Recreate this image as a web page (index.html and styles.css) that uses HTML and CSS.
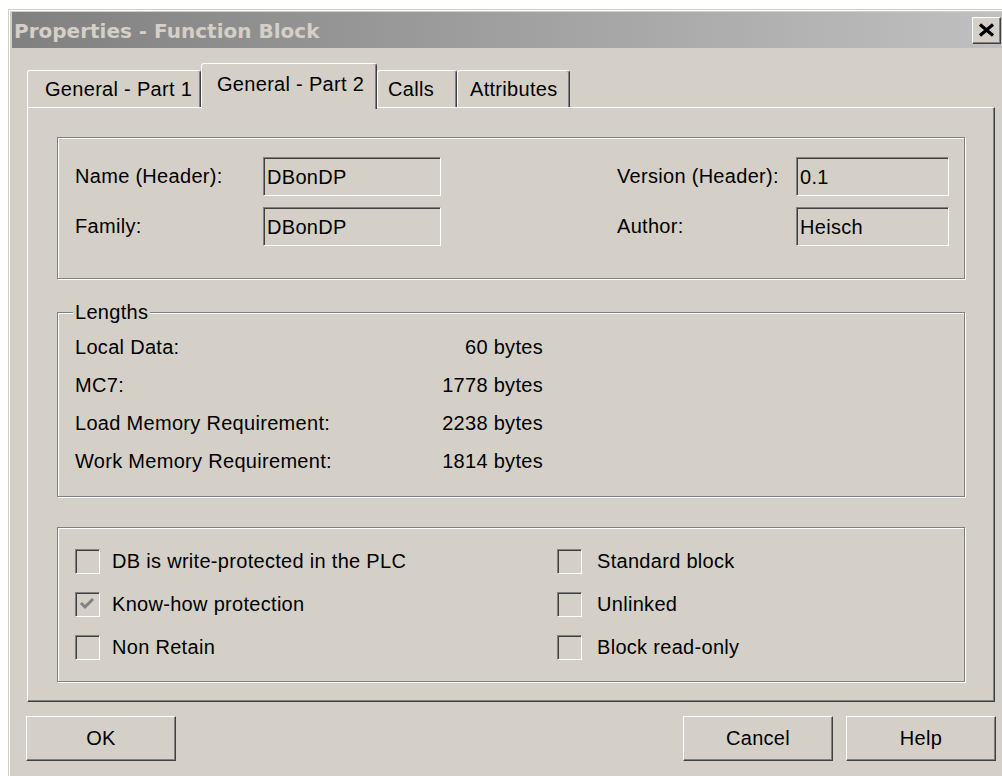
FILE: index.html
```html
<!DOCTYPE html>
<html lang="en">
<head>
<meta charset="utf-8">
<title>Properties - Function Block</title>
<link rel="stylesheet" href="styles.css">
</head>
<body>
<div class="dialog">
  <div class="titlebar">
    <span class="title">Properties - Function Block</span>
    <button class="close-btn" aria-label="Close">
      <svg width="17" height="14" viewBox="0 0 17 14"><path d="M2 1.5 L15 12.5 M15 1.5 L2 12.5" stroke="#000" stroke-width="3.2" fill="none"/></svg>
    </button>
  </div>

  <div class="dialog-body">
    <div class="tabs">
      <div class="tab tab-part1">General - Part 1</div>
      <div class="tab tab-part2 tab-active">General - Part 2</div>
      <div class="tab tab-calls">Calls</div>
      <div class="tab tab-attr">Attributes</div>
    </div>

    <div class="panel">
      <div class="group group-header">
        <span class="label">Name (Header):</span>
        <div class="field">DBonDP</div>
        <span></span>
        <span class="label">Version (Header):</span>
        <div class="field">0.1</div>

        <span class="label">Family:</span>
        <div class="field">DBonDP</div>
        <span></span>
        <span class="label">Author:</span>
        <div class="field">Heisch</div>
      </div>

      <div class="group group-lengths">
        <span class="group-caption">Lengths</span>
        <div class="len-row"><span>Local Data:</span><span class="len-value">60 bytes</span></div>
        <div class="len-row"><span>MC7:</span><span class="len-value">1778 bytes</span></div>
        <div class="len-row"><span>Load Memory Requirement:</span><span class="len-value">2238 bytes</span></div>
        <div class="len-row"><span>Work Memory Requirement:</span><span class="len-value">1814 bytes</span></div>
      </div>

      <div class="group group-flags">
        <label class="check"><span class="box"></span>DB is write-protected in the PLC</label>
        <label class="check check-right"><span class="box"></span>Standard block</label>
        <label class="check"><span class="box box-checked"><svg width="23" height="23" viewBox="0 0 23 23"><path d="M5 10 L9 14 L17 6" stroke="#808080" stroke-width="3" fill="none"/></svg></span>Know-how protection</label>
        <label class="check check-right"><span class="box"></span>Unlinked</label>
        <label class="check"><span class="box"></span>Non Retain</label>
        <label class="check check-right"><span class="box"></span>Block read-only</label>
      </div>
    </div>

    <div class="buttons">
      <button class="btn btn-ok">OK</button>
      <div class="buttons-right">
        <button class="btn">Cancel</button>
        <button class="btn btn-help">Help</button>
      </div>
    </div>
  </div>
</div>
</body>
</html>
```

FILE: styles.css
```css
html, body {
  margin: 0;
  padding: 0;
  background: #ffffff;
  overflow: hidden;
  height: 100%;
}

body {
  font-family: "Liberation Sans", Arial, sans-serif;
  font-size: 20px;
  letter-spacing: 0.3px;
  color: #000;
}

/* Window frame */
.dialog {
  box-sizing: border-box;
  width: 1000px;
  min-height: 800px;
  margin: 9px 0 0 8px;
  padding: 2px 0 0 3px;
  background: #d4d0c8;
  border-top: 1px solid #d4d0c8;
  border-left: 1px solid #d4d0c8;
  box-shadow: inset 1px 1px 0 #ffffff;
}

.titlebar {
  height: 36px;
  display: flex;
  align-items: center;
  justify-content: space-between;
  background: linear-gradient(to right, #808080, #c0c0c0);
  padding-left: 2px;
}

.title {
  font-family: "DejaVu Sans", Verdana, sans-serif;
  font-weight: bold;
  font-size: 20px;
  letter-spacing: 0;
  color: #d4d0c8;
  line-height: 1;
  padding-top: 2px;
}

.close-btn {
  box-sizing: border-box;
  width: 29px;
  height: 27px;
  margin-right: 7px;
  padding: 0;
  display: flex;
  align-items: center;
  justify-content: center;
  background: #d4d0c8;
  border: 1px solid;
  border-color: #ffffff #404040 #404040 #ffffff;
  box-shadow: inset -1px -1px 0 #808080;
}

.close-btn svg {
  display: block;
}

/* Body */
.dialog-body {
  padding: 15px 13px 0 15px;
}

.tabs {
  display: flex;
  align-items: flex-end;
  height: 44px;
}

.tab {
  box-sizing: border-box;
  height: 37px;
  display: flex;
  align-items: center;
  background: #d4d0c8;
  border-top: 1px solid #ffffff;
  border-left: 1px solid #ffffff;
  border-right: 1px solid #404040;
  border-radius: 3px 3px 0 0;
  box-shadow: inset -1px 0 0 #808080;
  white-space: nowrap;
}

.tab-part1 { width: 174px; padding-left: 17px; }
.tab-part2 { width: 176px; padding-left: 15px; }
.tab-calls { width: 80px; padding-left: 10px; }
.tab-attr  { width: 113px; padding-left: 12px; }

.tab-active {
  position: relative;
  z-index: 1;
  height: 46px;
  margin-bottom: -2px;
  padding-bottom: 4px;
}

.panel {
  box-sizing: border-box;
  width: 968px;
  padding: 29px 29px 19px 29px;
  border: 1px solid;
  border-color: #ffffff #404040 #404040 #ffffff;
  box-shadow: inset -1px -1px 0 #808080;
}

/* Etched group boxes */
.group {
  position: relative;
  border: 1px solid #808080;
  box-shadow: inset 1px 1px 0 #ffffff, 1px 1px 0 #ffffff;
}

.group-header {
  display: grid;
  grid-template-columns: 188px 178px 1fr 179px 153px;
  grid-auto-rows: 39px;
  row-gap: 11px;
  align-items: center;
  padding: 19px 15px 32px 17px;
}

.label {
  white-space: nowrap;
}

.field {
  box-sizing: border-box;
  height: 39px;
  display: flex;
  align-items: center;
  padding: 1px 3px 0;
  border: 1px solid;
  border-color: #808080 #ffffff #ffffff #808080;
  box-shadow: inset 1px 1px 0 #404040, inset -1px -1px 0 #d4d0c8;
}

.group-lengths {
  margin-top: 33px;
  padding: 15px 15px 16px 17px;
}

.group-caption {
  position: absolute;
  top: -12px;
  left: 15px;
  padding: 0 2px;
  line-height: 23px;
  background: #d4d0c8;
}

.len-row {
  display: grid;
  grid-template-columns: 300px 168px;
  height: 38px;
  align-items: center;
}

.len-value {
  text-align: right;
}

.group-flags {
  margin-top: 30px;
  display: grid;
  grid-template-columns: 482px 1fr;
  grid-auto-rows: 43px;
  padding: 12px 15px 12px 17px;
}

.check {
  display: flex;
  align-items: center;
  gap: 12px;
  white-space: nowrap;
}

.check-right {
  gap: 15px;
}

.box {
  box-sizing: border-box;
  width: 25px;
  height: 25px;
  flex: none;
  border: 1px solid;
  border-color: #808080 #ffffff #ffffff #808080;
  box-shadow: inset 1px 1px 0 #404040, inset -1px -1px 0 #d4d0c8;
}

.box svg {
  display: block;
}

/* Command buttons */
.buttons {
  display: flex;
  justify-content: space-between;
  margin-top: 14px;
}

.buttons-right {
  display: flex;
  gap: 13px;
  margin-right: -1px;
}

.btn {
  box-sizing: border-box;
  width: 150px;
  height: 45px;
  padding: 0;
  font-family: "Liberation Sans", Arial, sans-serif;
  font-size: 20px;
  letter-spacing: 0.3px;
  color: #000;
  background: #d4d0c8;
  border: 1px solid;
  border-color: #ffffff #404040 #404040 #ffffff;
  box-shadow: inset -1px -1px 0 #808080;
}

.btn-ok {
  margin-left: -1px;
}
```
